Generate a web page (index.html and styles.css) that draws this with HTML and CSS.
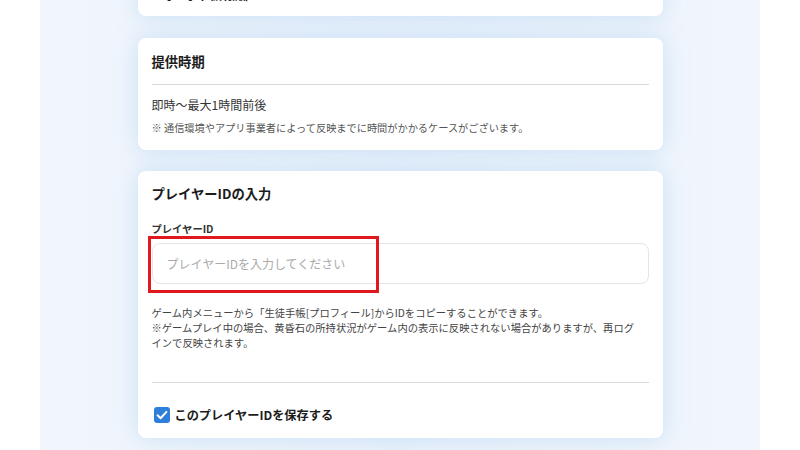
FILE: index.html
```html
<!DOCTYPE html>
<html lang="ja">
<head>
<meta charset="utf-8">
<link rel="stylesheet" href="styles.css">
</head>
<body>
<div class="panel">
  <div class="stack">
    <section class="card card-top">
      <p class="top-line">1. [SR] 中級報酬</p>
    </section>

    <section class="card">
      <h2 class="card-title">提供時期</h2>
      <hr class="divider">
      <p class="body-text">即時〜最大1時間前後</p>
      <p class="note">※ 通信環境やアプリ事業者によって反映までに時間がかかるケースがございます。</p>
    </section>

    <section class="card card-form">
      <h2 class="card-title">プレイヤーIDの入力</h2>
      <label class="field-label" for="pid">プレイヤーID</label>
      <div class="input-wrap">
        <input id="pid" class="text-input" type="text" placeholder="プレイヤーIDを入力してください">
        <div class="highlight"></div>
      </div>
      <p class="help">ゲーム内メニューから「生徒手帳[プロフィール]からIDをコピーすることができます。<br>※ゲームプレイ中の場合、黄昏石の所持状況がゲーム内の表示に反映されない場合がありますが、再ログインで反映されます。</p>
      <hr class="divider divider-lower">
      <label class="check-row">
        <span class="checkbox">
          <svg viewBox="0 0 16 16" width="16" height="16"><path d="M3.6 8.3 L6.6 11.2 L12.4 4.9" fill="none" stroke="#fff" stroke-width="2" stroke-linecap="round" stroke-linejoin="round"/></svg>
        </span>
        <span class="check-label">このプレイヤーIDを保存する</span>
      </label>
    </section>
  </div>
</div>
</body>
</html>
```

FILE: styles.css
```css
* { box-sizing: border-box; }
html, body { margin: 0; padding: 0; background: #ffffff; }
body {
  font-family: "Noto Sans CJK JP", "Noto Sans", sans-serif;
  color: #222;
  height: 450px;
  overflow: hidden;
}
.panel {
  width: 720px;
  height: 450px;
  margin: 0 auto;
  background: linear-gradient(90deg, #f1f6fc 0%, #eaf2fb 50%, #f1f6fc 100%);
  overflow: hidden;
}
.stack {
  width: 525px;
  margin: -16px auto 0;
  display: flex;
  flex-direction: column;
  gap: 22px;
}
.card {
  background: #fff;
  border-radius: 8px;
  padding: 14px 14px 13px;
  box-shadow: 0 0 22px rgba(170, 205, 240, 0.55);
}
.card-top { padding: 0 14px 12px; }
.top-line {
  margin: 0;
  font-size: 13px;
  font-weight: 700;
  line-height: 20px;
  color: #222;
}
.card-title {
  margin: 0;
  font-size: 13.3px;
  font-weight: 700;
  line-height: 20px;
  color: #1c1c1c;
}
.divider {
  border: 0;
  border-top: 1px solid #d9d9d9;
  margin: 12px 0 0;
}
.body-text {
  margin: 10px 0 0;
  font-size: 12px;
  line-height: 20px;
  color: #333;
}
.note {
  margin: 4px 0 0;
  font-size: 10.2px;
  line-height: 18px;
  color: #555;
}
.card-form { padding: 13px 14px 13px; margin-top: -1px; }
.field-label {
  display: block;
  margin-top: 17px;
  font-size: 10.3px;
  font-weight: 700;
  line-height: 16px;
  color: #333;
}
.input-wrap {
  position: relative;
  margin-top: 6px;
}
.text-input {
  display: block;
  width: 100%;
  height: 41px;
  border: 1px solid #e6e6e6;
  border-radius: 8px;
  padding: 0 14px;
  font-family: inherit;
  font-size: 12px;
  color: #333;
  background: #fff;
  outline: none;
}
.text-input::placeholder { color: #aaaaaa; }
.highlight {
  position: absolute;
  left: -4px;
  top: -7px;
  width: 231px;
  height: 57px;
  border: 3px solid #e0191e;
  pointer-events: none;
}
.help {
  margin: 21px 0 0;
  font-size: 10.3px;
  line-height: 15px;
  color: #444;
  padding-right: 6px;
}
.divider-lower { margin-top: 32px; }
.check-row {
  display: flex;
  align-items: center;
  gap: 5px;
  margin-top: 22px;
  height: 20px;
  padding-left: 2px;
}
.checkbox {
  width: 16px;
  height: 16px;
  border-radius: 3px;
  background: #2e7fd9;
  display: flex;
  align-items: center;
  justify-content: center;
}
.checkbox svg { display: block; }
.check-label {
  font-size: 12.2px;
  font-weight: 700;
  line-height: 20px;
  color: #1c1c1c;
}
```
